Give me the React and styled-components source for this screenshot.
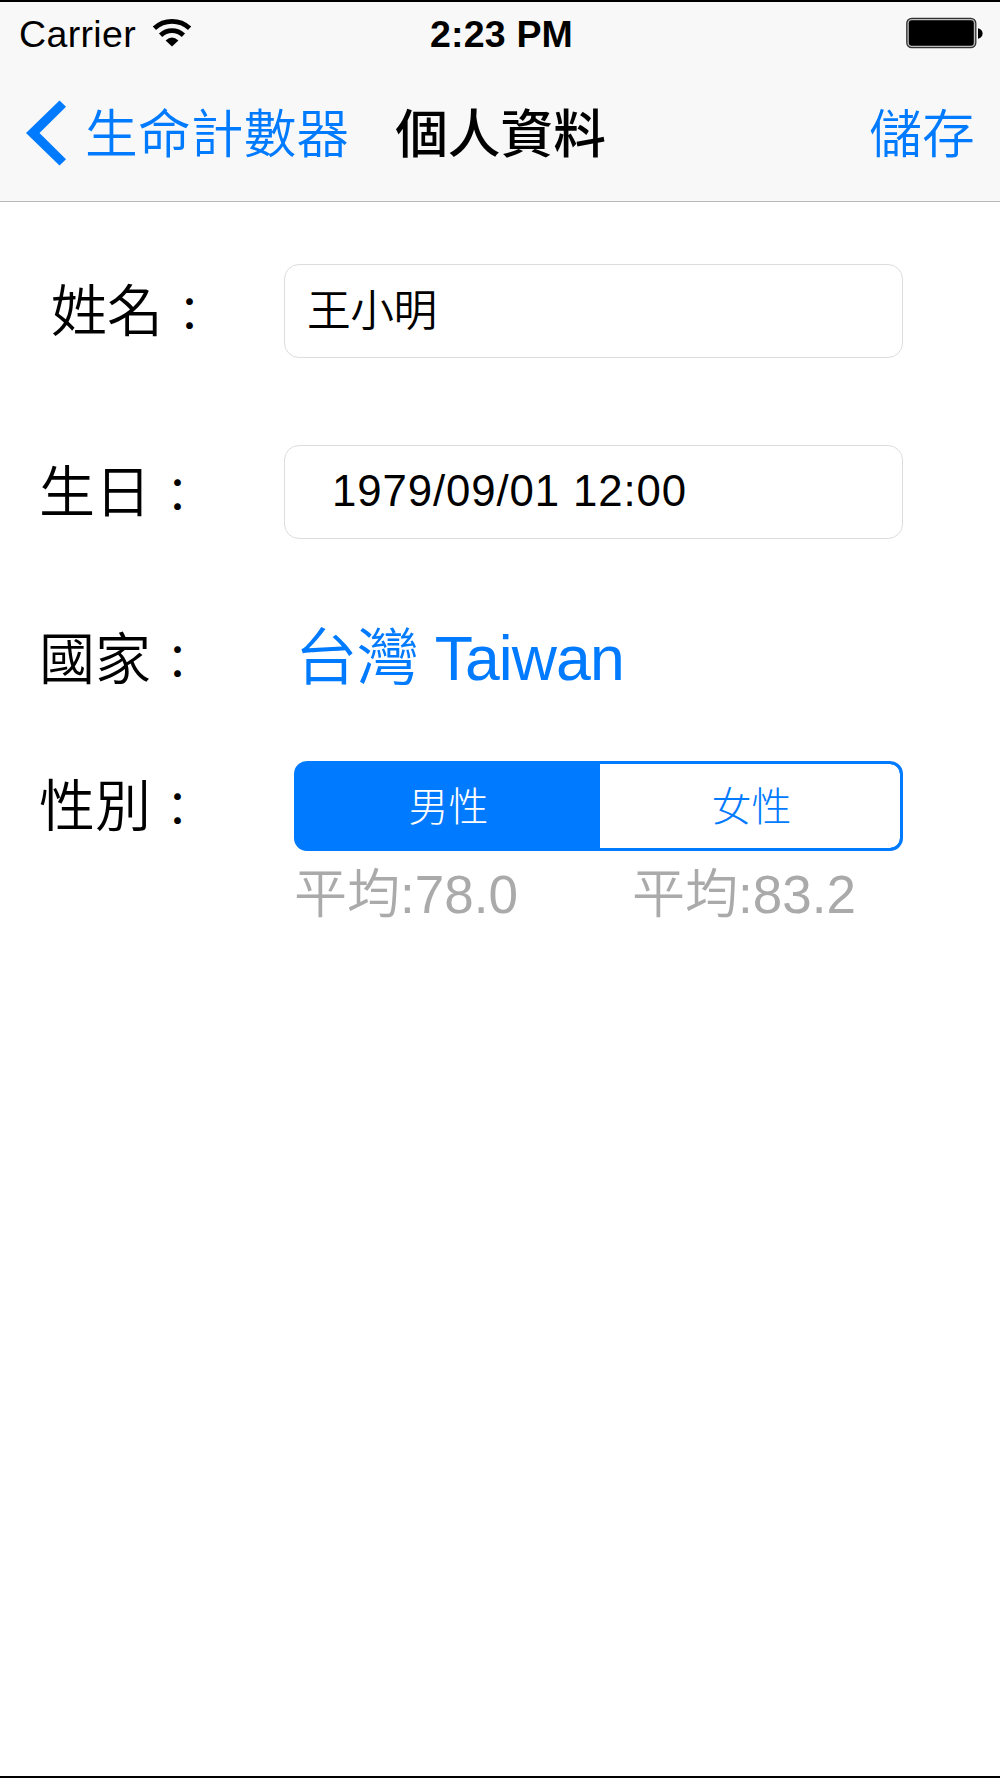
import { useState } from "react";
import styled, { createGlobalStyle } from "styled-components";

export default function App() {
    const [gender, setGender] = useState("male");

    return (
        <Screen>
            <GlobalStyle />
            <Header>
                <StatusBar>
                    <Carrier>
                        Carrier
                        <WifiIcon />
                    </Carrier>
                    <Clock>2:23 PM</Clock>
                    <BatteryIcon />
                </StatusBar>
                <NavBar>
                    <BackButton>
                        <Chevron />
                        <NavText>生命計數器</NavText>
                    </BackButton>
                    <Title>個人資料</Title>
                    <SaveButton>
                        <NavText>儲存</NavText>
                    </SaveButton>
                </NavBar>
            </Header>
            <Form>
                <Row height={94} space={87}>
                    <Label indent={51}>姓名<Colon>：</Colon></Label>
                    <Field inset={22} spacing={-0.5} line={92}>王小明</Field>
                </Row>
                <Row height={94} space={79}>
                    <Label indent={39}>生日<Colon>：</Colon></Label>
                    <Field inset={47} spacing={0.9} line={90}>1979/09/01 12:00</Field>
                </Row>
                <Row height={82} space={61}>
                    <Label indent={39}>國家<Colon>：</Colon></Label>
                    <Country>台灣 Taiwan</Country>
                </Row>
                <Row height={90} space={13}>
                    <Label indent={39}>性別<Colon>：</Colon></Label>
                    <Segments>
                        <Segment active={gender === "male"} onClick={() => setGender("male")}>男性</Segment>
                        <Segment active={gender === "female"} onClick={() => setGender("female")}>女性</Segment>
                    </Segments>
                </Row>
                <Averages>
                    <Average>平均:78.0</Average>
                    <Average>平均:83.2</Average>
                </Averages>
            </Form>
        </Screen>
    );
}

function WifiIcon() {
    return (
        <svg width="40" height="30" viewBox="0 0 40 30" fill="none" stroke="#000" strokeWidth="4.8">
            <path d="M2.4 10.2A26 26 0 0 1 37.6 10.2" />
            <path d="M8.6 17.2A16.5 16.5 0 0 1 31.4 17.2" />
            <path d="M13.6 22.6Q20 16.6 26.4 22.6L20 28.6Z" fill="#000" stroke="none" />
        </svg>
    );
}

function Chevron() {
    return (
        <svg width="40" height="66" viewBox="0 0 40 66" fill="#007aff">
            <path d="M33.5 0.5L40 6.8L13.5 33L40 59.2L33.5 65.5L0 33Z" />
        </svg>
    );
}

function BatteryIcon() {
    return (
        <Battery width="78" height="32" viewBox="0 0 78 32">
            <rect x="0.8" y="1.3" width="69" height="29.4" rx="5" fill="#bbb" stroke="#333" strokeWidth="1.3" />
            <rect x="2.8" y="3.2" width="65" height="25.6" rx="3" fill="#000" />
            <path d="M72 11.2Q76.6 12.4 76.6 16.5T72 21.8Z" fill="#000" />
        </Battery>
    );
}

const GlobalStyle = createGlobalStyle`
    *{
        box-sizing: border-box;
    }
    body{
        margin: 0;
        background-color: #FFF;
    }
    button{
        padding: 0;
        border: none;
        background: none;
        font: inherit;
        cursor: pointer;
    }
`;

const Screen = styled.div`
    width: 1000px;
    height: 1778px;
    overflow: hidden;
    border-top: 2px solid #000;
    border-bottom: 2px solid #000;
    background-color: #FFF;
    color: #000;
    font-family: "Liberation Sans", "Noto Sans CJK TC", sans-serif;
    font-weight: 350;
    white-space: nowrap;
`;

const Header = styled.div`
    height: 200px;
    background-color: #F8F8F8;
    border-bottom: 1px solid #B8B8B8;
`;

const StatusBar = styled.div`
    display: grid;
    grid-template-columns: 1fr auto 1fr;
    align-items: center;
    height: 64px;
    padding: 0 16px 0 19px;
    font-size: 37.5px;
    line-height: 64px;
`;

const Carrier = styled.div`
    display: flex;
    align-items: center;
    gap: 16px;
    letter-spacing: 0.35px;
    svg{
        margin-top: -3px;
    }
`;

const Clock = styled.div`
    font-weight: 700;
    letter-spacing: 0.2px;
`;

const Battery = styled.svg`
    justify-self: end;
    margin-top: -2px;
`;

const NavBar = styled.div`
    display: grid;
    grid-template-columns: 1fr auto 1fr;
    align-items: center;
    height: 135px;
    padding: 0 25px 0 26px;
    font-size: 52.7px;
    line-height: 80px;
`;

const BackButton = styled.button`
    display: flex;
    align-items: center;
    gap: 19px;
    color: #007AFF;
    svg{
        margin-top: -2px;
    }
`;

const NavText = styled.span`
    padding-top: 3px;
    letter-spacing: 0.2px;
`;

const Title = styled.div`
    padding-top: 3px;
    font-weight: 500;
`;

const SaveButton = styled.button`
    display: flex;
    justify-self: end;
    color: #007AFF;
`;

const Form = styled.div`
    padding-top: 62px;
`;

const Row = styled.div`
    display: grid;
    grid-template-columns: 284px 1fr;
    align-items: center;
    height: ${props => props.height}px;
    margin-bottom: ${props => props.space}px;
`;

const Label = styled.div`
    padding-top: 2px;
    padding-left: ${props => props.indent}px;
    font-size: 56px;
    line-height: 80px;
`;

const Colon = styled.span`
    margin-left: 3px;
    font-size: 47px;
    line-height: 1;
`;

const Field = styled.div`
    width: 619px;
    height: 94px;
    padding-left: ${props => props.inset}px;
    border: 1px solid #DDD;
    border-radius: 15px;
    font-size: 43.75px;
    line-height: ${props => props.line}px;
    letter-spacing: ${props => props.spacing}px;
`;

const Country = styled.div`
    padding-left: 11px;
    color: #007AFF;
    font-size: 62.5px;
    line-height: 80px;
    height: 82px;
    letter-spacing: -0.9px;
`;

const Segments = styled.div`
    display: grid;
    grid-template-columns: 303px 300px;
    width: 609px;
    height: 90px;
    margin-left: 10px;
    overflow: hidden;
    border: 3px solid #007AFF;
    border-radius: 13px;
    background-color: #007AFF;
`;

const Segment = styled.button`
    background-color: ${props => props.active ? "#007AFF" : "#FFF"};
    color: ${props => props.active ? "#FFF" : "#007AFF"};
    font-size: 40px;
    font-weight: 300;
    line-height: 82px;
    padding-top: 2px;
    &:last-child{
        padding-left: 3px;
        border-radius: 0 10px 10px 0;
    }
`;

const Averages = styled.div`
    display: grid;
    grid-template-columns: 338px 1fr;
    padding-left: 294px;
`;

const Average = styled.div`
    color: #AAA;
    font-size: 53px;
    line-height: 62px;
`;
